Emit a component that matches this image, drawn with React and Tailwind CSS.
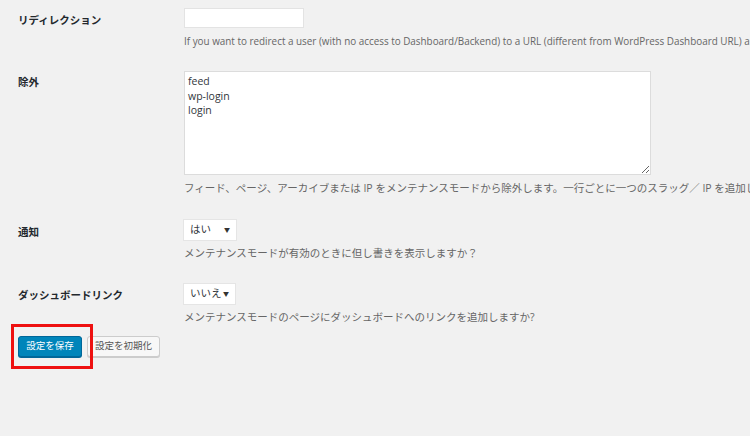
const font = "font-['Open_Sans','Noto_Sans_CJK_JP',sans-serif]";

function Row({ label, labelPad, top, children }) {
    return (
        <div className="flex" style={{ marginTop: top }}>
            <div className={`w-[166px] shrink-0 text-[10.5px] font-bold text-[#23282d] ${labelPad}`}>
                {label}
            </div>
            <div className="flex flex-col min-w-0">{children}</div>
        </div>
    );
}

function Desc({ children, small }) {
    return (
        <p className={`mt-[4px] leading-[18px] text-[#666] whitespace-nowrap ${small ? 'text-[9.9px]' : 'text-[10.5px]'}`}>
            {children}
        </p>
    );
}

function FakeSelect({ value, width }) {
    return (
        <div className={`flex h-[20px] items-center justify-between bg-white pl-[6px] pr-[6px] text-[10.5px] text-[#32373c] shadow-[0_0_0_1px_#e5e5e5] ${width}`}>
            <span>{value}</span>
            <span className="text-[6px] text-[#333]">▼</span>
        </div>
    );
}

export default function App() {
    return (
        <div className={`relative h-[436px] w-[750px] overflow-hidden bg-[#f1f1f1] pl-[18px] ${font}`}>
            <Row label="リディレクション" labelPad="pt-[5px]" top={8}>
                <input
                    type="text"
                    className="h-[20px] w-[120px] border border-[#e3e3e3] bg-white outline-none"
                />
                <Desc small>
                    If you want to redirect a user (with no access to Dashboard/Backend) to a URL (different from WordPress Dashboard URL) and also to set the expiry date.
                </Desc>
            </Row>

            <Row label="除外" labelPad="pt-[4px]" top={21}>
                <textarea
                    readOnly
                    defaultValue={"feed\nwp-login\nlogin"}
                    className="h-[104px] w-[467px] resize border border-[#dcdcdc] bg-white px-[3px] pt-[2px] text-[10.5px] leading-[14.5px] text-[#32373c] outline-none"
                />
                <Desc>
                    フィード、ページ、アーカイブまたは IP をメンテナンスモードから除外します。一行ごとに一つのスラッグ／ IP を追加してください。
                </Desc>
            </Row>

            <Row label="通知" labelPad="pt-[5px]" top={23}>
                <FakeSelect value="はい" width="w-[52px]" />
                <Desc>メンテナンスモードが有効のときに但し書きを表示しますか？</Desc>
            </Row>

            <Row label="ダッシュボードリンク" labelPad="pt-[4px]" top={22}>
                <FakeSelect value="いいえ" width="w-[51px]" />
                <Desc>メンテナンスモードのページにダッシュボードへのリンクを追加しますか?</Desc>
            </Row>

            <div className="mt-[10px] flex gap-[5px]">
                <button className="h-[21px] w-[64px] rounded-[3px] border border-[#006799] bg-[#0085ba] text-[9.5px] text-white shadow-[0_1px_0_#006799]">
                    設定を保存
                </button>
                <button className="h-[21px] w-[73px] rounded-[3px] border border-[#cccccc] bg-[#f7f7f7] text-[9.5px] text-[#555] shadow-[0_1px_0_#cccccc]">
                    設定を初期化
                </button>
            </div>

            {/* annotation box around the save button */}
            <div className="pointer-events-none absolute left-[11px] top-[324px] h-[45px] w-[82px] border-[3px] border-[#ee1111]" />
        </div>
    );
}
